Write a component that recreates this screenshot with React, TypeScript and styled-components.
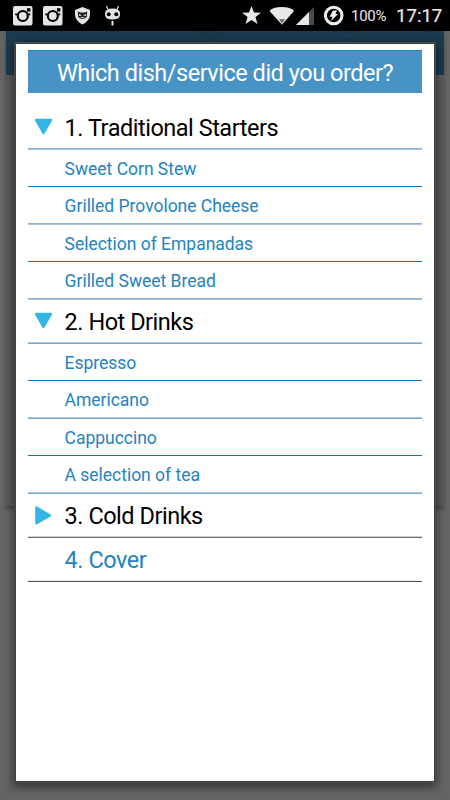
import React from 'react';
import styled, { createGlobalStyle } from 'styled-components';

const Global = createGlobalStyle`
  * { box-sizing: border-box; }
  body { margin: 0; background: #666; font-family: Roboto, "Noto Sans", sans-serif; overflow: hidden; }
`;
const Screen = styled.div`
  position: relative; width: 450px; height: 800px; overflow: hidden; background: #646464;
`;
const StatusBar = styled.header`
  height: 31px; padding: 0 9px 0 12px; background: #000; color: #e8e8e8;
  display: flex; align-items: center; justify-content: space-between;
`;
const StatusIcons = styled.svg` display: block; flex: none; height: 31px; `;
const StatusGroup = styled.div` display: flex; align-items: center; `;
const Battery = styled.span`
  width: 44px; font-size: 15px; line-height: 31px; letter-spacing: -0.3px; padding-top: 2px;
`;
const Clock = styled.time` font-size: 18.6px; line-height: 31px; width: 46px; white-space: nowrap; padding: 1px 0 0 1px; -webkit-text-stroke: 0.2px #e8e8e8; `;
const PageCard = styled.div`
  margin: 0 6px; height: 475px; background: #5c5c5c; box-shadow: 0 3px 3px rgba(0,0,0,.28);
`;
const AppBar = styled.div` height: 44px; background: #1b3b50; `;
const Pattern = styled.svg` display: block; `;
const Dialog = styled.section`
  position: absolute; left: 16px; top: 44px; width: 418px; height: 737px; background: #fff;
  padding: 6px 12px 0; outline: 1px solid #3e3e3e;
  box-shadow: 0 0 0 2px #4c4c4c, 0 3px 9px 3px rgba(0,0,0,.48);
`;
const Title = styled.h1`
  margin: 0; width: 394px; height: 43px; background: #4893c5; border-top: 1px solid #1686c1; color: #fff;
  font-size: 23.5px; letter-spacing: -0.48px; line-height: 44px; font-weight: 400; text-align: center; white-space: nowrap;
`;
const Menu = styled.ul` list-style: none; margin: 13px 0 0; padding: 0; width: 394px; `;
const Row = styled.li<{ $h: number; $top: string; $line: string }>`
  height: ${p => p.$h}px; display: grid; grid-template-columns: 36.6px 1fr;
  background: linear-gradient(${p => p.$top} 0 1px, ${p => p.$line} 1px 2px) bottom / 100% 2px no-repeat;
`;
const Label = styled.span<{ $dish: boolean; $color: string }>`
  font-size: ${p => (p.$dish ? 17.5 : 23.5)}px; line-height: ${p => (p.$dish ? 38 : 44)}px; color: ${p => p.$color};
  letter-spacing: ${p => (p.$dish ? -0.02 : -0.48)}px; white-space: nowrap;
`;
const Arrow = styled.svg` width: 30px; height: 44px; display: block; `;

type Item = { text: string; kind: 'group' | 'dish' | 'link'; h: number; top: string; line: string; open?: boolean };
const items: Item[] = [
  { text: '1. Traditional Starters', kind: 'group', open: true, h: 44, top: '#8ab2d6', line: '#a5c6e2' },
  { text: 'Sweet Corn Stew', kind: 'dish', h: 37, top: '#fff', line: '#0b73b7' },
  { text: 'Grilled Provolone Cheese', kind: 'dish', h: 38, top: '#8ab2d6', line: '#a5c6e2' },
  { text: 'Selection of Empanadas', kind: 'dish', h: 37, top: '#fff', line: '#0b73b7' },
  { text: 'Grilled Sweet Bread', kind: 'dish', h: 38, top: '#8ab2d6', line: '#a5c6e2' },
  { text: '2. Hot Drinks', kind: 'group', open: true, h: 44, top: '#a9c8e2', line: '#78a8d0' },
  { text: 'Espresso', kind: 'dish', h: 37, top: '#fff', line: '#0b73b7' },
  { text: 'Americano', kind: 'dish', h: 38, top: '#a9c8e2', line: '#78a8d0' },
  { text: 'Cappuccino', kind: 'dish', h: 37, top: '#fff', line: '#0b73b7' },
  { text: 'A selection of tea', kind: 'dish', h: 38, top: '#b0cde6', line: '#78a8d0' },
  { text: '3. Cold Drinks', kind: 'group', h: 44, top: '#d0d0d0', line: '#6c6c6c' },
  { text: '4. Cover', kind: 'link', h: 44, top: '#eee', line: '#505050' },
];

function Instagram({ x }: { x: number }) {
  return <g transform={`translate(${x} 6)`}>
    <rect width="19.5" height="19.5" rx="2" fill="#e6e6e6" />
    <path d="M2.2 7.6H5.5V9.2H2.2ZM14 7.6H17.3V9.2H14Z" fill="#000" />
    <circle cx="9.8" cy="10" r="5" fill="none" stroke="#000" strokeWidth="2.2" />
    <rect x="14" y="2.2" width="3.4" height="3.4" fill="#000" />
  </g>;
}

export default function App() {
  return <Screen>
    <Global />
    <StatusBar>
      <StatusIcons width="112" viewBox="12 0 112 31">
        <Instagram x={13} /><Instagram x={43} />
        <path d="M82.5 7L90 10V15Q89.5 21 82.5 24.5Q75.5 21 75 15V10Z" fill="#e5e5e5" />
        <path d="M77.8 11.5L80.5 12.6H84.5L87.2 11.5L86.8 17Q82.5 21 78.2 17Z" fill="#222" />
        <path d="M78.7 14L81.8 15.2L79.4 16ZM86.3 14L83.2 15.2L85.6 16ZM80.8 17.3H84.2V18.1H80.8Z" fill="#fff" />
        <path d="M106.5 6L108 9.5M118.5 6L117 9.5" stroke="#e4e4e4" strokeWidth="1.2" />
        <path d="M105 13Q105.5 8.5 112.5 8.5Q119.5 8.5 120 13V15Q119.5 19.5 112.5 19.5Q105.5 19.5 105 15Z" fill="#e4e4e4" />
        <circle cx="108.7" cy="14.2" r="2" fill="#000" /><circle cx="116.3" cy="14.2" r="2" fill="#000" />
        <path d="M112.5 20.8V25.5" stroke="#e4e4e4" strokeWidth="2" />
      </StatusIcons>
      <StatusGroup>
        <StatusIcons width="109" viewBox="242 0 109 31">
          <path d="M251.5 6L254 12.6L261 12.8L255.5 17L257.5 24L251.5 20L245.5 24L247.6 17L242 12.8L249 12.6Z" fill="#e8e8e8" />
          <path d="M269.5 11Q272.5 7 281.8 7Q291 7 294 11L282 24.8Z" fill="#e8e8e8" /><path d="M279 19H285L282 24Z" fill="#777" />
          <path d="M296 25L314 7V25Z" fill="#4b4b4b" /><path d="M296 25L309 12V25Z" fill="#e8e8e8" />
          <circle cx="333.7" cy="15.5" r="8.3" fill="none" stroke="#eee" strokeWidth="3" />
          <path d="M333 10.5H337L335.5 14H338L331 21L332.4 16.8H329.5Z" fill="#eee" />
        </StatusIcons>
        <Battery>100%</Battery><Clock>17:17</Clock>
      </StatusGroup>
    </StatusBar>
    <PageCard><AppBar>
      <Pattern width="438" height="44" viewBox="6 31 438 44" fill="none" stroke="#1a384c" strokeWidth="1.2">
        <circle cx="32" cy="37" r="5" /><path d="M28 34L37 40" /><circle cx="139" cy="40" r="4" />
        <path d="M198 32Q216 32 226 34Q212 43 204 38Z" fill="#1a384c" />
        <path d="M340 41Q341 32 352 32Q362 32 360 41M348 41L360 33" /><circle cx="430" cy="39" r="8" /><circle cx="430" cy="39" r="4" />
      </Pattern>
    </AppBar></PageCard>
    <Dialog>
      <Title>Which dish/service did you order?</Title>
      <Menu>{items.map(item => <Row key={item.text} $h={item.h} $top={item.top} $line={item.line}>
        <span>{item.kind === 'group' && <Arrow viewBox="28 106 30 44">
          {item.open
            ? <path d="M36 120H51L43.5 133Z" fill="#33b5e5" stroke="#33b5e5" strokeWidth="2.4" strokeLinejoin="round" />
            : <path d="M36.4 119.5L50 127.5L36.4 135.3Z" fill="#33b5e5" stroke="#33b5e5" strokeWidth="2.4" strokeLinejoin="round" />}
        </Arrow>}</span>
        <Label $dish={item.kind === 'dish'} $color={item.kind === 'group' ? '#000' : '#2483be'}>{item.text}</Label>
      </Row>)}</Menu>
    </Dialog>
  </Screen>;
}
